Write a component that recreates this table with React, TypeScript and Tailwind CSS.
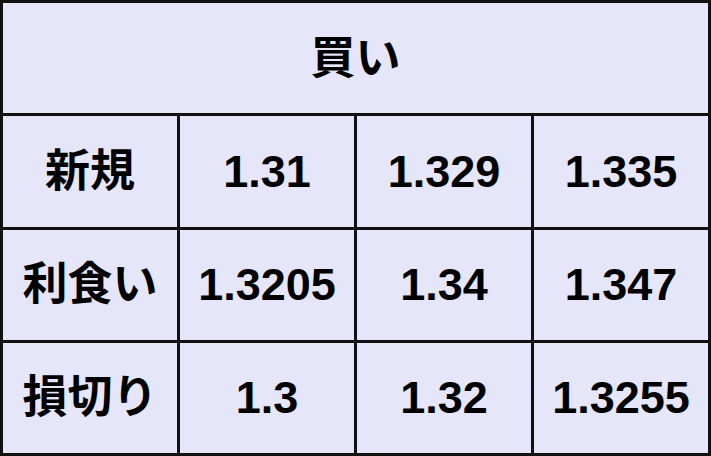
import { Fragment } from "react";

const rows: { label: string; values: string[] }[] = [
  { label: "新規", values: ["1.31", "1.329", "1.335"] },
  { label: "利食い", values: ["1.3205", "1.34", "1.347"] },
  { label: "損切り", values: ["1.3", "1.32", "1.3255"] },
];

function Cell({ children, className = "" }: { children: React.ReactNode; className?: string }) {
  return (
    <div className={`flex items-center justify-center bg-[#e6e6fa] ${className}`}>
      {children}
    </div>
  );
}

export default function App() {
  return (
    <div
      className="grid h-[456px] w-[711px] grid-cols-4 grid-rows-4 gap-[3px] bg-[#111] p-[3px] text-[45px] font-bold leading-none text-black"
      style={{ fontFamily: '"Liberation Sans", "Noto Sans CJK JP", sans-serif' }}
    >
      <Cell className="col-span-4">買い</Cell>
      {rows.map((r) => (
        <Fragment key={r.label}>
          <Cell>{r.label}</Cell>
          {r.values.map((v, i) => (
            <Cell key={i}>{v}</Cell>
          ))}
        </Fragment>
      ))}
    </div>
  );
}
